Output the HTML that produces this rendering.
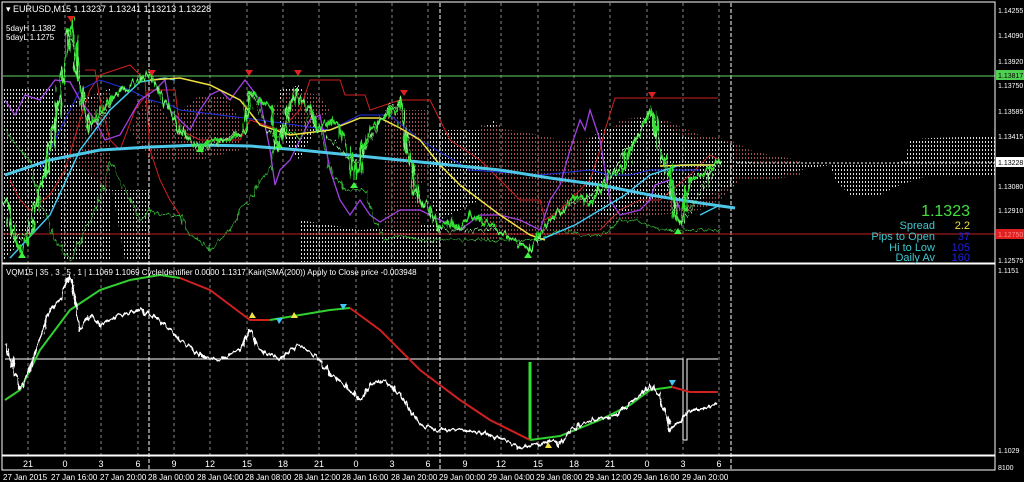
<!DOCTYPE html>
<html><head><meta charset="utf-8"><style>
html,body{margin:0;padding:0;background:#000;}
svg{display:block;font-family:"Liberation Sans",sans-serif;}
</style></head><body>
<svg width="1024" height="482" viewBox="0 0 1024 482" xmlns="http://www.w3.org/2000/svg">
<defs>
<pattern id="dw" width="3" height="4" patternUnits="userSpaceOnUse"><rect x="1" y="1" width="1" height="2" fill="#ddd"/></pattern>
<pattern id="dr" width="3" height="4" patternUnits="userSpaceOnUse"><rect x="1" y="1" width="1" height="2" fill="#a05050"/></pattern>
<filter id="jit" x="-5%" y="-20%" width="110%" height="140%"><feTurbulence type="fractalNoise" baseFrequency="0.35 0.05" numOctaves="2" seed="3"/><feDisplacementMap in="SourceGraphic" scale="14" xChannelSelector="R" yChannelSelector="G"/></filter>
<filter id="jit2" x="-5%" y="-20%" width="110%" height="140%"><feTurbulence type="fractalNoise" baseFrequency="0.3 0.08" numOctaves="2" seed="7"/><feDisplacementMap in="SourceGraphic" scale="8" xChannelSelector="R" yChannelSelector="G"/></filter>
</defs>
<rect width="1024" height="482" fill="#000"/>
<g stroke="#888" stroke-width="1" stroke-dasharray="3,3">
<line x1="28" y1="3" x2="28" y2="455"/><line x1="65" y1="3" x2="65" y2="455"/><line x1="101" y1="3" x2="101" y2="455"/><line x1="138" y1="3" x2="138" y2="455"/><line x1="174" y1="3" x2="174" y2="455"/><line x1="210" y1="3" x2="210" y2="455"/><line x1="247" y1="3" x2="247" y2="455"/><line x1="283" y1="3" x2="283" y2="455"/><line x1="319" y1="3" x2="319" y2="455"/><line x1="356" y1="3" x2="356" y2="455"/><line x1="392" y1="3" x2="392" y2="455"/><line x1="428" y1="3" x2="428" y2="455"/><line x1="465" y1="3" x2="465" y2="455"/><line x1="501" y1="3" x2="501" y2="455"/><line x1="538" y1="3" x2="538" y2="455"/><line x1="574" y1="3" x2="574" y2="455"/><line x1="610" y1="3" x2="610" y2="455"/><line x1="647" y1="3" x2="647" y2="455"/><line x1="683" y1="3" x2="683" y2="455"/><line x1="719" y1="3" x2="719" y2="455"/>
</g>
<g stroke="#fff" stroke-width="1" stroke-dasharray="4,2">
<line x1="149" y1="3" x2="149" y2="470"/><line x1="440" y1="3" x2="440" y2="470"/><line x1="731" y1="3" x2="731" y2="470"/>
</g>
<g>
<polygon fill="url(#dw)" points="4,88 53,88 53,110 112,88 112,260 62,260 60,200 4,260"/>
<polygon fill="url(#dw)" points="112,190 125,260 150,260 150,190"/>
<polygon fill="url(#dr)" points="70,110 110,90 110,190 70,160"/>
<polygon fill="url(#dr)" points="130,130 148,95 170,120 200,95 225,95 240,120 240,150 200,160 150,160"/>
<polygon fill="url(#dw)" points="280,90 300,85 310,110 315,130 300,160 290,150 280,130"/>
<polygon fill="url(#dr)" points="270,110 290,90 320,95 330,110 300,140"/>
<polygon fill="url(#dw)" points="300,220 330,225 360,230 420,225 440,225 440,262 300,262"/>
<polygon fill="url(#dr)" points="385,110 430,110 430,135 480,135 480,160 440,170 420,185 420,230 385,230"/>
<polygon fill="url(#dw)" points="430,130 480,130 495,120 500,130 500,175 480,200 440,220 430,200"/>
<polygon fill="url(#dr)" points="480,130 500,125 500,240 480,240"/>
<polygon fill="url(#dr)" points="480,125 540,135 560,140 580,140 600,135 610,130 620,120 640,117 665,120 700,135 730,140 750,150 770,155 800,160 800,175 770,180 740,180 720,200 700,210 660,215 620,220 600,230 560,235 520,235 500,235 480,230"/>
<polygon fill="url(#dw)" points="585,145 600,130 620,127 640,118 660,120 680,135 700,140 720,140 735,145 735,185 720,190 700,200 680,200 660,195 640,205 620,215 600,215 585,200"/>
<polygon fill="url(#dw)" points="735,160 760,163 790,163 830,163 830,165 800,170 780,175 750,175 735,175"/>
<polygon fill="url(#dw)" points="830,165 890,165 905,160 910,140 930,138 995,136 995,175 930,175 900,185 880,195 850,195 835,180"/>
</g>
<line x1="3" y1="76" x2="995" y2="76" stroke="#5fd35f" stroke-width="1"/>
<line x1="3" y1="234" x2="995" y2="234" stroke="#c02020" stroke-width="1"/>
<polyline fill="none" stroke="#d02020" stroke-width="1" points="85,70 95,70 100,100 110,140 120,150 135,110 150,90 175,90 180,130 200,140 240,140 250,120 280,130 300,110 310,80 340,80 345,95 365,95 370,110 400,100 430,100 440,120 450,140 480,160 500,180 520,200 540,200 545,220 560,210 590,180 600,150 605,130 615,98 718,98"/>
<polyline fill="none" stroke="#d02020" stroke-width="1" points="10,180 20,200 30,210 50,195 65,170 80,120 90,90 100,75 115,70 130,65 145,80 150,150 160,180 170,200 180,215"/>
<polyline fill="none" stroke="#c03030" stroke-width="1" points="600,230 620,210 640,200 660,200 690,175 710,155 720,160"/>
<polyline fill="none" stroke="#2030e0" stroke-width="1" points="40,170 60,130 80,90 100,80 130,90 150,100 170,105 180,110 220,115 260,120 330,130 360,115 390,115 420,140 470,170 540,175 590,170 610,175 630,175 650,170 680,170 700,170"/>
<polyline fill="none" stroke="#a040e0" stroke-width="1.3" points="5,100 15,115 25,95 40,100 55,80 70,82 80,100 95,120 105,140 120,135 140,100 155,90 165,80 170,110 180,120 190,130 200,110 210,95 220,90 230,100 245,80 260,100 270,150 275,185 280,170 290,160 300,140 310,120 320,115 330,170 340,200 350,215 360,200 370,215 380,222 400,210 420,210 440,220 460,230 480,215 500,215 520,220 540,230 550,200 560,185 570,150 580,120 585,130 590,110 600,140 605,170 610,200 620,215 640,210 650,200 655,185 670,180 680,210"/>
<polyline fill="none" stroke="#30b030" stroke-width="1" filter="url(#jit2)" points="5,130 20,150 30,160 40,200 55,240 70,260 90,220 100,200 110,160 125,190 140,220 150,210 160,215 180,215 190,235 200,240 210,250 220,240 230,230 240,210 250,200 260,180 270,170 275,140 285,125 300,140 310,110 320,130 330,170 345,190 365,190 375,220 385,240 400,235 420,240 460,240 500,240 540,240 560,230 580,235 600,235 610,230 620,220 640,222 660,230 720,230"/>
<polyline fill="none" stroke="#40c8f0" stroke-width="1.5" points="10,258 50,215 80,150 110,110 140,82 165,78 175,80"/>
<polyline fill="none" stroke="#40c8f0" stroke-width="1.5" points="540,240 575,225 600,210 625,195 650,175 680,165 715,165"/>
<polyline fill="none" stroke="#40c8f0" stroke-width="1.5" points="700,215 720,205"/>
<polyline fill="none" stroke="#f0e040" stroke-width="1.5" points="150,80 180,78 210,85 240,100 260,125 290,135 330,130 360,118 380,118 400,128 420,140 440,165 460,185 480,200 500,215 530,235 545,240"/>
<polyline fill="none" stroke="#f0e040" stroke-width="1.5" points="660,166 690,165 715,165"/>
<polyline fill="none" stroke="#4ec8e8" stroke-width="3" points="5,175 50,160 100,150 150,147 200,145 250,146 300,150 350,155 400,160 450,165 500,170 550,178 600,185 650,195 700,203 735,208"/>
<polyline fill="none" stroke="#30e030" stroke-width="3" stroke-linejoin="round" filter="url(#jit)" points="5,200 15,240 22,255 30,230 40,190 50,150 58,110 62,80 68,30 72,20 76,60 82,100 90,130 100,110 110,100 120,90 130,85 140,80 150,75 160,95 170,110 180,130 190,140 200,150 210,140 230,140 245,130 250,90 260,100 270,110 278,150 285,130 295,90 300,100 310,110 320,130 330,120 340,125 350,160 355,180 360,160 370,130 380,120 395,110 400,100 405,140 410,155 415,190 420,200 430,210 440,230 450,220 460,230 470,215 480,220 500,230 520,245 530,250 540,235 550,220 560,210 570,200 580,195 590,205 600,190 610,175 625,165 635,140 645,125 650,110 655,120 660,150 670,170 675,215 680,225 690,180 700,175 710,170 720,160"/>
<polyline fill="none" stroke="#90f090" stroke-width="1" filter="url(#jit)" points="5,200 15,240 30,230 40,190 50,150 58,110 68,30 76,60 90,130 120,90 150,75 180,130 200,150 245,130 250,90 278,150 295,90 320,130 350,160 360,160 380,120 400,100 415,190 440,230 500,230 530,250 560,210 600,190 635,140 650,110 660,150 680,225 720,160"/>
<g fill="#e02020"><polygon points="67,16 75,16 71,22"/><polygon points="148,70 156,70 152,76"/><polygon points="245,70 253,70 249,76"/><polygon points="294,70 302,70 298,76"/><polygon points="400,90 408,90 404,96"/><polygon points="648,92 656,92 652,98"/></g>
<g fill="#40f040"><polygon points="18,258 26,258 22,252"/><polygon points="196,152 204,152 200,146"/><polygon points="275,148 283,148 279,142"/><polygon points="350,188 358,188 354,182"/><polygon points="524,258 532,258 528,252"/><polygon points="674,234 682,234 678,228"/></g>
<rect x="2" y="2" width="993" height="261" fill="none" stroke="#fff" stroke-width="1"/>
<rect x="2" y="264" width="993" height="191" fill="none" stroke="#fff" stroke-width="1"/>
<rect x="2" y="456" width="993" height="14" fill="none" stroke="#fff" stroke-width="1"/>
<polyline fill="none" stroke="#fff" stroke-width="1" points="5,359 683,359 683,440 687,440 687,359 718,359"/>
<line x1="530" y1="362" x2="530" y2="440" stroke="#30e030" stroke-width="3"/>
<polyline fill="none" stroke="#30d030" stroke-width="2" points="5,400 20,390 40,350 70,310 100,290 130,280 160,275 180,278"/>
<polyline fill="none" stroke="#d02020" stroke-width="2" points="180,278 210,290 230,305 250,320 270,320"/>
<polyline fill="none" stroke="#30d030" stroke-width="2" points="270,320 300,315 330,310 350,308"/>
<polyline fill="none" stroke="#d02020" stroke-width="2" points="350,308 380,330 420,370 460,400 490,420 530,440"/>
<polyline fill="none" stroke="#30d030" stroke-width="2" points="530,440 560,436 600,420 630,405 650,390 672,387"/>
<polyline fill="none" stroke="#d02020" stroke-width="2" points="672,387 690,392 718,392"/>
<polyline fill="none" stroke="#fff" stroke-width="2" stroke-linejoin="round" filter="url(#jit2)" points="5,345 12,360 20,390 30,370 40,340 50,310 60,300 65,285 70,275 75,300 80,330 90,315 100,325 110,320 120,315 140,310 160,320 180,340 200,355 220,360 240,350 250,330 260,350 280,360 290,350 300,345 320,360 330,375 340,380 350,390 360,400 370,385 380,380 390,385 400,395 410,410 420,425 440,430 460,430 480,433 500,438 520,448 535,445 550,440 560,445 570,430 590,420 610,418 620,412 640,395 650,385 660,395 670,430 680,420 690,410 700,410 718,403"/>
<g fill="#f0e040"><polygon points="249,318 256,318 252,312"/><polygon points="291,318 298,318 294,312"/><polygon points="545,448 552,448 548,442"/></g>
<g fill="#40c8f0"><polygon points="276,318 283,318 279,324"/><polygon points="340,304 347,304 343,310"/><polygon points="669,380 676,380 672,386"/></g>
<g fill="#fff" font-size="9">
<text x="6" y="12">▾ EURUSD,M15  1.13237 1.13241 1.13213 1.13228</text>
<text x="6" y="31" font-size="8">5dayH 1.1382</text>
<text x="6" y="40" font-size="8">5dayL 1.1275</text>
<text x="6" y="275" font-size="8">VQM15 | 35 , 3 , 5 , 1 |  1.1069 1.1069  CycleIdentifier 0.0000 1.1317  Kairi(SMA(200)) Apply to Close price -0.003948</text>
</g>
<g fill="#fff" font-size="7">
<text x="998" y="13">1.14255</text><text x="998" y="38">1.14090</text><text x="998" y="64">1.13920</text><text x="998" y="88">1.13750</text><text x="998" y="114">1.13585</text><text x="998" y="139">1.13415</text><text x="998" y="189">1.13080</text><text x="998" y="213">1.12910</text><text x="998" y="263">1.12575</text><text x="998" y="273">1.1151</text><text x="998" y="453">1.1029</text><text x="998" y="470">8100</text>
</g>
<rect x="996" y="70" width="28" height="10" fill="#50d050"/><text x="998" y="78" font-size="7" fill="#000">1.13817</text>
<rect x="996" y="157" width="28" height="10" fill="#fff"/><text x="998" y="165" font-size="7" fill="#000">1.13228</text>
<rect x="996" y="229" width="28" height="10" fill="#e02020"/><text x="998" y="237" font-size="7" fill="#f88">1.12750</text>
<line x1="737" y1="163" x2="995" y2="163" stroke="#fff" stroke-dasharray="2,2"/>
<g text-anchor="end">
<text x="970" y="216" fill="#40e040" font-size="16">1.1323</text>
<text x="935" y="229" fill="#40c8d0" font-size="11">Spread</text><text x="970" y="229" fill="#f0e040" font-size="11">2.2</text>
<text x="935" y="240" fill="#40c8d0" font-size="11">Pips to Open</text><text x="970" y="240" fill="#2020e0" font-size="11">37</text>
<text x="935" y="251" fill="#40c8d0" font-size="11">Hi to Low</text><text x="970" y="251" fill="#2020e0" font-size="11">105</text>
<text x="935" y="261" fill="#40c8d0" font-size="11">Daily Av</text><text x="970" y="261" fill="#2020e0" font-size="11">160</text>
</g>
<g fill="#fff" font-size="9" text-anchor="middle">
<text x="28" y="467">21</text><text x="65" y="467">0</text><text x="101" y="467">3</text><text x="138" y="467">6</text><text x="174" y="467">9</text><text x="210" y="467">12</text><text x="247" y="467">15</text><text x="283" y="467">18</text><text x="319" y="467">21</text><text x="356" y="467">0</text><text x="392" y="467">3</text><text x="428" y="467">6</text><text x="465" y="467">9</text><text x="501" y="467">12</text><text x="538" y="467">15</text><text x="574" y="467">18</text><text x="610" y="467">21</text><text x="647" y="467">0</text><text x="683" y="467">3</text><text x="719" y="467">6</text>
</g>
<g fill="#fff" font-size="8">
<text x="3" y="480">27 Jan 2015</text><text x="51" y="480">27 Jan 16:00</text><text x="100" y="480">27 Jan 20:00</text><text x="148" y="480">28 Jan 00:00</text><text x="197" y="480">28 Jan 04:00</text><text x="245" y="480">28 Jan 08:00</text><text x="294" y="480">28 Jan 12:00</text><text x="342" y="480">28 Jan 16:00</text><text x="391" y="480">28 Jan 20:00</text><text x="439" y="480">29 Jan 00:00</text><text x="488" y="480">29 Jan 04:00</text><text x="536" y="480">29 Jan 08:00</text><text x="585" y="480">29 Jan 12:00</text><text x="633" y="480">29 Jan 16:00</text><text x="682" y="480">29 Jan 20:00</text>
</g>
</svg>
</body></html>
